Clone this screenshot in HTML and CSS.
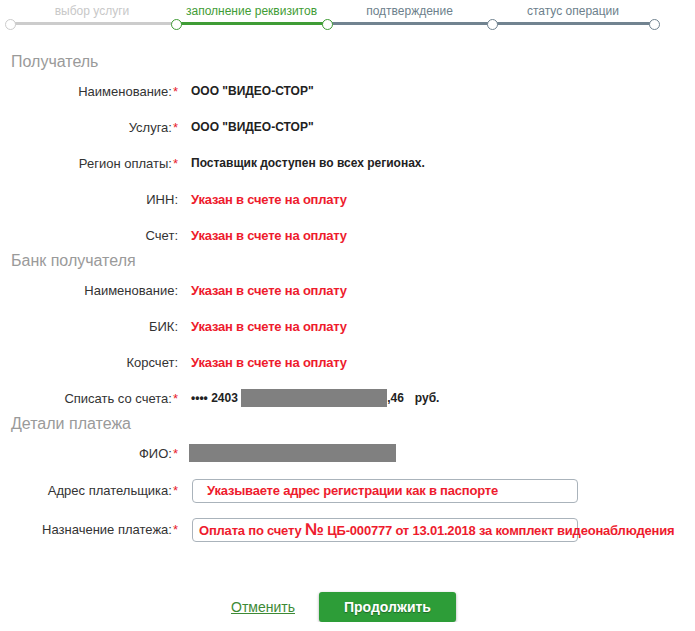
FILE: index.html
```html
<!DOCTYPE html>
<html lang="ru">
<head>
<meta charset="utf-8">
<title>Заполнение реквизитов</title>
<link rel="stylesheet" href="styles.css">
</head>
<body>
<div class="stepper">
  <div class="step step-done s1"><div class="step-label">выбор услуги</div><div class="step-bar"></div></div>
  <div class="step step-active s2"><div class="step-label">заполнение реквизитов</div><div class="step-bar"></div></div>
  <div class="step step-next s3 start-green"><div class="step-label">подтверждение</div><div class="step-bar"></div></div>
  <div class="step step-next s4 last"><div class="step-label">статус операции</div><div class="step-bar"></div></div>
</div>

<h2 class="section">Получатель</h2>
<div class="row"><div class="label">Наименование:<span class="req">*</span></div><div class="value">ООО "ВИДЕО-СТОР"</div></div>
<div class="row"><div class="label">Услуга:<span class="req">*</span></div><div class="value">ООО "ВИДЕО-СТОР"</div></div>
<div class="row"><div class="label">Регион оплаты:<span class="req">*</span></div><div class="value">Поставщик доступен во всех регионах.</div></div>
<div class="row"><div class="label">ИНН:</div><div class="value red">Указан в счете на оплату</div></div>
<div class="row"><div class="label">Счет:</div><div class="value red">Указан в счете на оплату</div></div>

<h2 class="section">Банк получателя</h2>
<div class="row"><div class="label">Наименование:</div><div class="value red">Указан в счете на оплату</div></div>
<div class="row"><div class="label">БИК:</div><div class="value red">Указан в счете на оплату</div></div>
<div class="row"><div class="label">Корсчет:</div><div class="value red">Указан в счете на оплату</div></div>
<div class="row"><div class="label">Списать со счета:<span class="req">*</span></div><div class="value account">•••• 2403 <span class="mask mask-acc"></span><span class="cents">,46</span><span class="cur">руб.</span></div></div>

<h2 class="section">Детали платежа</h2>
<div class="row"><div class="label">ФИО:<span class="req">*</span></div><div class="value"><span class="mask mask-fio"></span></div></div>
<div class="row row-input"><div class="label">Адрес плательщика:<span class="req">*</span></div><div class="value"><div class="field field-indent">Указываете адрес регистрации как в паспорте</div></div></div>
<div class="row row-input"><div class="label">Назначение платежа:<span class="req">*</span></div><div class="value"><div class="field">Оплата по счету <span class="numsign">№</span> ЦБ-000777 от 13.01.2018 за комплект видеонаблюдения</div></div></div>

<div class="actions">
  <a class="cancel" href="#">Отменить</a>
  <button class="btn" type="button">Продолжить</button>
</div>
</body>
</html>
```

FILE: styles.css
```css
* { box-sizing: border-box; }
body {
  margin: 0;
  background: #fff;
  font-family: "Liberation Sans", Arial, sans-serif;
  color: #333;
  width: 695px;
}

/* stepper */
.stepper {
  display: flex;
  height: 54px;
  padding-left: 9px;
}
.step { position: relative; height: 26px; }
.s1 { width: 166px; }
.s2 { width: 153px; }
.s3 { width: 163px; }
.s4 { width: 164px; }
.step-label {
  height: 22px;
  line-height: 22px;
  font-size: 12px;
  text-align: center;
  white-space: nowrap;
}
.step-bar { height: 3px; }
.step-done .step-label { color: #c8c8c8; }
.step-done .step-bar { background: #cccccc; }
.step-active .step-label { color: #3f9c35; }
.step-active .step-bar { background: #3f9c35; }
.step-next .step-label { color: #6d7f8c; }
.step-next .step-bar { background: #718390; }

.step::before, .step.last::after, .step-active::after {
  content: "";
  position: absolute;
  top: 19px;
  width: 9px;
  height: 9px;
  border-radius: 50%;
  background: #fff;
  border: 1.6px solid #718390;
  z-index: 1;
}
.step::before { left: -4px; }
.step.last::after, .step-active::after { right: -5px; }
.step-done::before { border-color: #cccccc; }
.step-active::before, .step-active::after { border-color: #3f9c35; }
.start-green::before { display: none; }

/* sections */
.section {
  margin: -1px 0 2px;
  padding-left: 11px;
  height: 18px;
  line-height: 18px;
  font-size: 16px;
  font-weight: normal;
  color: #9a9a9a;
}

.row {
  display: grid;
  grid-template-columns: 178px 1fr;
  column-gap: 13px;
  align-items: center;
  height: 36px;
}
.row-input { height: 39px; }
.label {
  text-align: right;
  font-size: 13px;
  color: #333;
  white-space: nowrap;
}
.req { color: #e8202a; margin-left: 1px; }
.value {
  font-size: 12px;
  font-weight: bold;
  color: #222;
  white-space: nowrap;
  display: flex;
  align-items: center;
}
.value.red, .field {
  font-family: "Liberation Sans Narrow", "Arial Narrow", "Liberation Sans", sans-serif;
  font-size: 13px;
  letter-spacing: -0.2px;
  font-weight: bold;
  color: #ee1b2d;
}
.mask { display: inline-block; background: #808080; height: 18px; }
.mask-acc { width: 146px; }
.mask-fio { width: 207px; margin-left: -2px; }
.cur { margin-left: 11px; }
.value.account { white-space: pre; }

.field {
  width: 386px;
  height: 24px;
  margin-left: 1px;
  border: 1px solid #aab3bb;
  border-radius: 4px;
  padding-left: 6px;
  line-height: 22px;
  white-space: nowrap;
  overflow: visible;
}
.field-indent { padding-left: 14px; }
.numsign { font-size: 17px; letter-spacing: 0; }

.actions {
  display: flex;
  align-items: center;
  gap: 24px;
  margin-top: 43px;
  padding-left: 231px;
}
.cancel {
  font-size: 14px;
  color: #3d8a35;
  text-decoration: underline;
}
.btn {
  width: 137px;
  height: 30px;
  border: none;
  border-radius: 3px;
  background: #2d9d38;
  color: #fff;
  font-family: "Liberation Sans", Arial, sans-serif;
  font-size: 14px;
  font-weight: bold;
  text-shadow: 0 1px 1px rgba(0,0,0,0.35);
  box-shadow: 0 1px 3px rgba(0,0,0,0.35);
}
```
